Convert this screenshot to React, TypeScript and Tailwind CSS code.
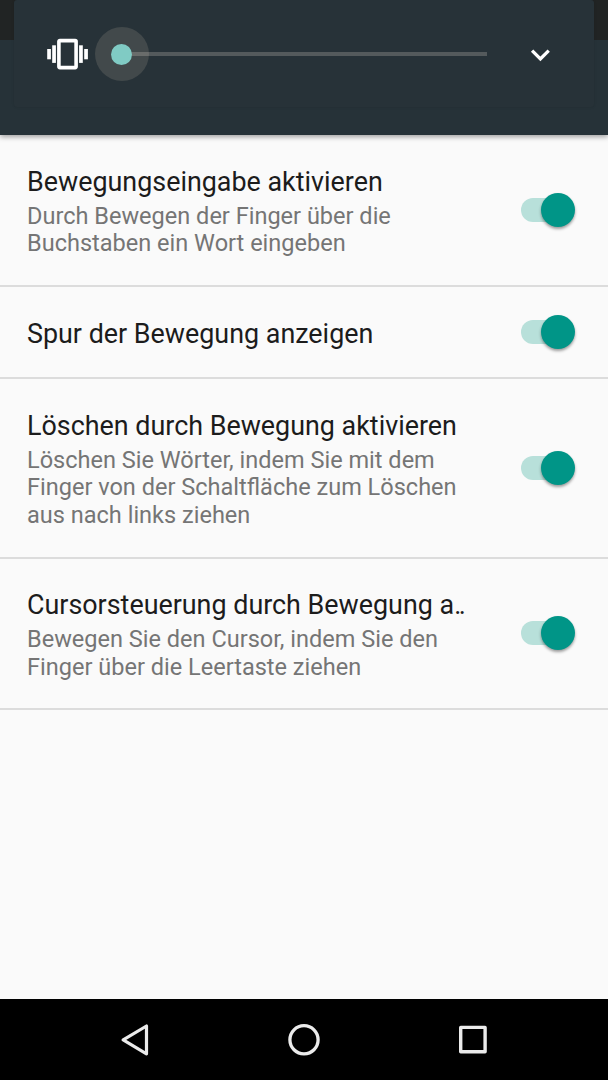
const settings = [
    {
        title: 'Bewegungseingabe aktivieren',
        summary: ['Durch Bewegen der Finger über die', 'Buchstaben ein Wort eingeben'],
        height: 'h-[152px]',
    },
    {
        title: 'Spur der Bewegung anzeigen',
        summary: [],
        height: 'h-[92px]',
    },
    {
        title: 'Löschen durch Bewegung aktivieren',
        summary: ['Löschen Sie Wörter, indem Sie mit dem', 'Finger von der Schaltfläche zum Löschen', 'aus nach links ziehen'],
        height: 'h-[179.5px]',
    },
    {
        title: 'Cursorsteuerung durch Bewegung a',
        truncated: true,
        summary: ['Bewegen Sie den Cursor, indem Sie den', 'Finger über die Leertaste ziehen'],
        height: 'h-[151.5px]',
    },
];

const VibrateIcon = () => (
    <svg width="42" height="32" viewBox="0 0 42 32" fill="#fff" className="shrink-0">
        <rect x="0.2" y="11" width="3.7" height="10.3" />
        <rect x="5.2" y="7.3" width="3.7" height="17.6" />
        <rect x="32.1" y="7.3" width="3.7" height="17.6" />
        <rect x="37.2" y="11" width="3.7" height="10.3" />
        <rect x="11.9" y="2.6" width="17.2" height="27" rx="1" fill="none" stroke="#fff" strokeWidth="3.6" />
    </svg>
);

const VolumePanel = () => (
    <header className="relative z-10 h-[135px] shrink-0 bg-[#263238] shadow-[0_2px_5px_rgba(0,0,0,0.36)]">
        <div className="h-10 bg-[#212424]" />
        <div className="absolute left-[14px] top-0 flex h-[107px] w-[580px] items-start rounded-[3px] bg-[#273238] pl-[33px] shadow-[0_0_3px_rgba(0,0,0,0.12)]">
            <div className="flex h-[108px] items-center">
                <VibrateIcon />
                <div className="relative ml-[6px] flex h-[54px] w-[392px] items-center pl-[27px]">
                    <div className="absolute -left-[0.5px] flex h-[54px] w-[54px] items-center justify-center rounded-full bg-[#42494b]" />
                    <div className="relative h-[4px] w-full bg-[#f5e8e0]/22" />
                    <div className="absolute left-[16px] h-[21px] w-[21px] rounded-full bg-[#80cbc4]" />
                </div>
                <svg width="20" height="14" viewBox="0 0 20 14" className="ml-[43px] mt-[4px]" fill="none" stroke="#fff" strokeWidth="3.3">
                    <path d="M2.1 1.7 10.4 10 18.7 1.7" />
                </svg>
            </div>
        </div>
    </header>
);

const Toggle = () => (
    <div className="relative h-[34px] w-[54px] shrink-0">
        <div className="absolute left-0 top-[5px] h-6 w-[50px] rounded-full bg-[#b8e0da]" />
        <div className="absolute right-0 top-0 h-[34px] w-[34px] rounded-full bg-[#009587] shadow-[0_2px_3px_rgba(0,0,0,0.38)]" />
    </div>
);

const NavigationBar = () => (
    <nav className="flex h-[81px] shrink-0 items-center justify-center gap-[137px] bg-black">
        <svg width="32" height="32" viewBox="0 0 32 32" fill="none" stroke="#ebebeb" strokeWidth="3.2" strokeLinejoin="round">
            <path d="M27.5 2V29.8L4.2 15.9Z" />
        </svg>
        <svg width="32" height="32" viewBox="0 0 32 32" fill="none" stroke="#ebebeb" strokeWidth="3.3">
            <circle cx="16" cy="15.8" r="14.1" />
        </svg>
        <svg width="32" height="32" viewBox="0 0 32 32" fill="none" stroke="#ebebeb" strokeWidth="3.4" strokeLinejoin="round">
            <rect x="3.7" y="3.4" width="24.4" height="24.4" />
        </svg>
    </nav>
);

const App = () => {
    return (
        <div className="flex h-[1080px] w-[608px] flex-col overflow-hidden bg-[#fafafa] font-[Roboto,sans-serif]">
            <VolumePanel />

            {/* Settings list */}
            <main className="flex-1">
                {settings.map((item) => (
                    <section key={item.title} className={`flex items-center justify-between border-b-2 border-[#dcdcdc] pl-[27px] pr-[33px] ${item.height}`}>
                        <div className="whitespace-nowrap pt-[4px]">
                            <h2 className="text-[26.88px] leading-[32px] text-[#1c1c1c]">
                                {item.title}
                                {item.truncated && <span className="tracking-[-2.5px]">..</span>}
                            </h2>
                            {item.summary.length > 0 && (
                                <p className="mt-[4.5px] text-[23.54px] leading-[27.6px] text-[#757575]">
                                    {item.summary.map((line) => (
                                        <span key={line} className="block">{line}</span>
                                    ))}
                                </p>
                            )}
                        </div>
                        <Toggle />
                    </section>
                ))}
            </main>

            <NavigationBar />
        </div>
    );
};

export default App;
